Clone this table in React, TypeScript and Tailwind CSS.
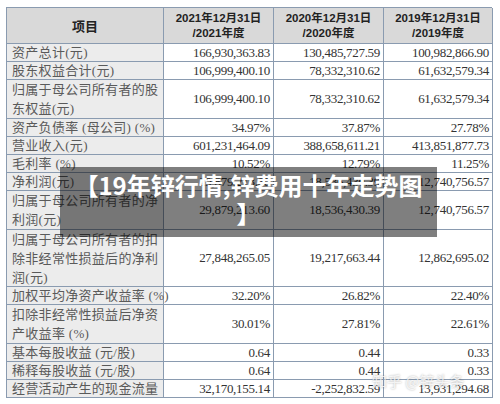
const rows = [
    { label: ["资产总计(元)"], v: ["166,930,363.83", "130,485,727.59", "100,982,866.90"] },
    { label: ["股东权益合计(元)"], v: ["106,999,400.10", "78,332,310.62", "61,632,579.34"] },
    { label: ["归属于母公司所有者的股", "东权益(元)"], v: ["106,999,400.10", "78,332,310.62", "61,632,579.34"] },
    { label: ["资产负债率 (母公司) (%)"], v: ["34.97%", "37.87%", "27.78%"] },
    { label: ["营业收入(元)"], v: ["601,231,464.09", "388,658,611.21", "413,851,877.73"] },
    { label: ["毛利率 (%)"], v: ["10.52%", "12.79%", "11.25%"] },
    { label: ["净利润(元)"], v: ["29,879,213.60", "18,536,430.39", "12,740,756.57"] },
    { label: ["归属于母公司所有者的净", "利润(元)"], v: ["29,879,213.60", "18,536,430.39", "12,740,756.57"] },
    { label: ["归属于母公司所有者的扣", "除非经常性损益后的净利", "润(元)"], v: ["27,848,265.05", "19,217,663.44", "12,862,695.02"] },
    { label: ["加权平均净资产收益率 (%)"], v: ["32.20%", "26.82%", "22.40%"] },
    { label: ["扣除非经常性损益后净资", "产收益率 (%)"], v: ["30.01%", "27.81%", "22.61%"] },
    { label: ["基本每股收益 (元/股)"], v: ["0.64", "0.44", "0.33"] },
    { label: ["稀释每股收益 (元/股)"], v: ["0.64", "0.44", "0.33"] },
    { label: ["经营活动产生的现金流量"], v: ["32,170,155.14", "-2,252,832.59", "13,931,294.68"] },
];

const heights: Record<number, string> = { 1: "h-[18px]", 2: "h-[39px]", 3: "h-[57px]" };

const cell = "border-r border-b border-[#8a9bb0] flex items-center";

export default function App() {
    return (
        <div className="relative w-[500px] h-[404px] bg-white overflow-hidden font-['Liberation_Serif','Noto_Sans_CJK_SC',serif]">
            <div className="ml-[6px] mt-[7px] w-[486px] border-l border-t border-[#8a9bb0] grid grid-cols-[157px_110px_110px_109px]">
                <div className={`${cell} h-[36px] justify-center bg-[#d9d9d9] text-[13px] font-bold text-[#222] font-['Noto_Sans_CJK_SC',sans-serif]`}>项目</div>
                {["2021", "2020", "2019"].map((y) => (
                    <div key={y} className={`${cell} h-[36px] flex-col justify-center bg-[#d9d9d9] text-[11.5px] font-bold leading-[15px] text-[#222] font-['Liberation_Sans','Noto_Sans_CJK_SC',sans-serif]`}>
                        <span>{y}年12月31日</span>
                        <span>/{y}年度</span>
                    </div>
                ))}
                {rows.map((r, i) => (
                    <div key={i} className="contents">
                        <div className={`${cell} ${heights[r.label.length]} bg-[#ececec] pl-[5px] text-[13px] leading-[19px] tracking-[0.3px] text-[#5a5a5a] whitespace-nowrap`}>
                            <div>
                                {r.label.map((l, j) => (
                                    <div key={j}>{l}</div>
                                ))}
                            </div>
                        </div>
                        {r.v.map((v, j) => (
                            <div key={j} className={`${cell} ${heights[r.label.length]} justify-end pr-[3px] text-[13px] text-[#333] tracking-[-0.3px]`}>
                                {v}
                            </div>
                        ))}
                    </div>
                ))}
            </div>

            <div className="absolute left-[60px] top-[167px] w-[377px] h-[70px] bg-black/50 pt-[4px] text-center text-[24px] font-bold leading-[28px] text-white font-['Noto_Sans_CJK_SC',sans-serif]">
                【19年锌行情,锌费用十年走势图
                <br />】
            </div>

            <div className="absolute left-[372px] top-[370px] text-[15px] text-white/80 [text-shadow:0_0_2px_rgba(0,0,0,0.35)] font-['Noto_Sans_CJK_SC',sans-serif]">
                知乎 @锌头条
            </div>
        </div>
    );
}
